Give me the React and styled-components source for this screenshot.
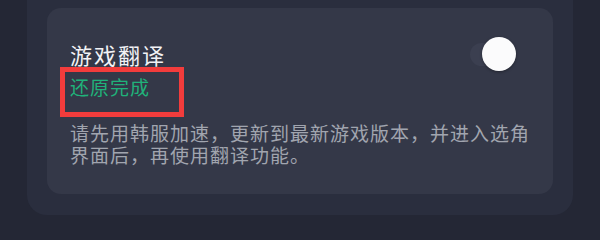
import React from "react";
import styled, { createGlobalStyle } from "styled-components";

const GlobalStyle = createGlobalStyle`
  body {
    margin: 0;
    background: #242735;
    font-family: "Noto Sans CJK SC", "Noto Sans", sans-serif;
  }
`;

const Page = styled.div`
  width: 600px;
  height: 221px;
  overflow: hidden;
`;

const Panel = styled.div`
  margin: 0 27px;
  padding: 8px 20px 21px;
  background: #2a2e3e;
  border-radius: 0 0 20px 20px;
`;

const Card = styled.div`
  background: #343848;
  border-radius: 14px;
  padding: 32px 20px 28px 23px;
`;

const TitleRow = styled.div`
  display: flex;
  align-items: center;
  justify-content: space-between;
`;

const Title = styled.div`
  color: #f2f2f5;
  font-size: 22px;
  line-height: 28px;
  letter-spacing: 2px;
`;

const Switch = styled.div`
  position: relative;
  width: 46px;
  height: 23px;
  margin-right: 17px;
  border-radius: 12px;
  background: #3b3f50;

  &::after {
    content: "";
    position: absolute;
    right: 0;
    top: -5.5px;
    width: 34px;
    height: 34px;
    border-radius: 50%;
    background: #fbfbfc;
    box-shadow: 0 1px 3px rgba(0, 0, 0, 0.35);
  }
`;

const Status = styled.div`
  position: relative;
  margin-top: 6.7px;
  color: #20b27a;
  font-size: 19px;
  line-height: 24px;
  letter-spacing: 1px;

  /* red annotation frame */
  &::after {
    content: "";
    position: absolute;
    left: -10px;
    top: -7.7px;
    width: 124px;
    height: 50px;
    box-sizing: border-box;
    border: 5px solid #f23c3c;
  }
`;

const Desc = styled.p`
  margin: 23px 0 0;
  color: #a1a5af;
  font-size: 19px;
  line-height: 22px;
  letter-spacing: 1px;
`;

export default function App() {
  return (
    <Page>
      <GlobalStyle />
      <Panel>
        <Card>
          <TitleRow>
            <Title>游戏翻译</Title>
            <Switch />
          </TitleRow>
          <Status>还原完成</Status>
          <Desc>
            请先用韩服加速，更新到最新游戏版本，并进入选角界面后，再使用翻译功能。
          </Desc>
        </Card>
      </Panel>
    </Page>
  );
}
